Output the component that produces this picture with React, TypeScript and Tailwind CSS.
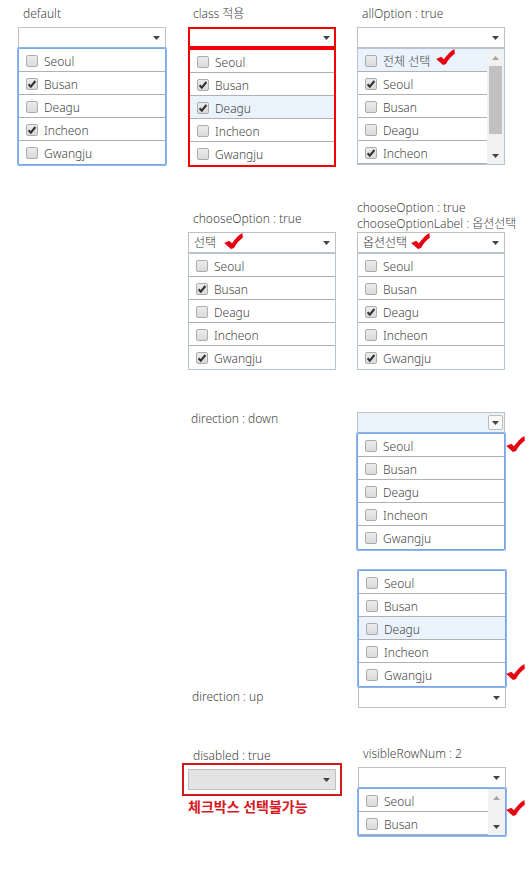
import React, { useState } from "react";

type Tone = "plain" | "focus" | "red";

const CITIES = ["Seoul", "Busan", "Deagu", "Incheon", "Gwangju"];

function RedCheck({ className = "" }: { className?: string }) {
  return (
    <svg viewBox="0 0 19 16" className={`h-4 w-[19px] shrink-0 ${className}`} aria-hidden="true">
      <path d="M0.2 10 L5.2 7.8 L8 10.2 C11 6 14 2.6 18.3 0 L18.9 4.6 C15.4 7.2 12.4 10.8 10 15 L7 16 Z" fill="#e60012" />
    </svg>
  );
}

function Arrow({ up = false, muted = false }: { up?: boolean; muted?: boolean }) {
  return (
    <svg viewBox="0 0 7 4" className="h-1 w-[7px]" aria-hidden="true">
      <path d={up ? "M0 4 L3.5 0 L7 4 Z" : "M0 0 L7 0 L3.5 4 Z"} fill={muted ? "#a3a3a3" : "#444"} />
    </svg>
  );
}

function Trigger({
  name,
  text,
  tone = "plain",
  hover = false,
  disabled = false,
  children,
}: {
  name: string;
  text?: string;
  tone?: Tone;
  hover?: boolean;
  disabled?: boolean;
  children?: React.ReactNode;
}) {
  const border = tone === "red" ? "border-2 border-[#f50000] pl-1" : "border border-[#c0c0c0] pl-[5px] pr-px";
  const fill = disabled ? "bg-[#e3e3e3]" : hover ? "bg-[#eaf2fb]" : "bg-white";
  return (
    <button
      type="button"
      aria-label={name}
      aria-haspopup="listbox"
      disabled={disabled}
      className={`flex h-[21px] w-full items-center ${border} ${fill}`}
    >
      <span className="text-[#333]">{text}</span>
      {children}
      <span
        className={`ml-auto flex size-[15px] items-center justify-center ${
          hover ? "rounded-xs border border-[#bbb] bg-[#f8f8f8]" : ""
        }`}
      >
        <Arrow />
      </span>
    </button>
  );
}

function Option({
  label,
  initial,
  hover,
  last,
  children,
}: {
  label: string;
  initial: boolean;
  hover: boolean;
  last: boolean;
  children?: React.ReactNode;
}) {
  const [checked, setChecked] = useState(initial);
  return (
    <li className={`h-[23px] border-b ${last ? "border-transparent" : "border-[#b0b0b0]"} ${hover ? "bg-[#eaf2fb]" : "bg-white"}`}>
      <label className="flex h-full items-center gap-1.5 pt-0.5 pl-[7px]">
        <span className="relative flex size-3">
          <input
            type="checkbox"
            checked={checked}
            onChange={() => setChecked(!checked)}
            className="size-3 appearance-none rounded-[2px] border border-[#acacac] bg-linear-to-b from-[#ececec] to-[#dadada]"
          />
          {checked && (
            <svg viewBox="0 0 12 12" className="pointer-events-none absolute inset-0 size-3" aria-hidden="true">
              <path d="M2.6 6.2 L4.8 8.6 L9.4 3" fill="none" stroke="#333" strokeWidth="2.1" />
            </svg>
          )}
        </span>
        <span className="pt-0.5">{label}</span>
        {children}
      </label>
    </li>
  );
}

function List({
  options = CITIES,
  checked = [],
  hover,
  tone = "plain",
  scroll,
  marked,
}: {
  options?: string[];
  checked?: string[];
  hover?: string;
  tone?: Tone;
  scroll?: "thumb" | "short";
  marked?: string;
}) {
  const border = {
    plain: "border border-[#b5c5d5]",
    focus: "relative rounded-[1px] border border-[#7aa5e6] ring-1 ring-[#8fb4ee]",
    red: "border-2 border-[#f50000]",
  }[tone];
  return (
    <div className={`flex ${border}`}>
      <ul className="min-w-0 flex-1">
        {options.map((o, i) => (
          <Option
            key={o}
            label={o}
            initial={checked.includes(o)}
            hover={hover === o}
            last={!scroll && i === options.length - 1}
          >
            {marked === o && <RedCheck className="-mt-2" />}
          </Option>
        ))}
      </ul>
      {scroll && (
        <div className="flex w-[17px] flex-col items-center bg-[#f1f1f1]">
          <button type="button" aria-label="Scroll up" className="flex h-[17px] w-full items-center justify-center">
            <Arrow up muted />
          </button>
          {scroll === "thumb" && <div className="h-[68px] w-[13px] bg-[#c1c1c1]" />}
          <button type="button" aria-label="Scroll down" className="mt-auto flex h-[17px] w-full items-center justify-center">
            <Arrow />
          </button>
        </div>
      )}
    </div>
  );
}

function Caption({ children }: { children: React.ReactNode }) {
  return <p className="pb-1.5 pl-[5px]">{children}</p>;
}

function Cell({ children }: { children?: React.ReactNode }) {
  return <div className="relative w-[148px] shrink-0">{children}</div>;
}

export default function App() {
  return (
    <main className="bg-white pt-[7px] pb-8 pl-[18px] font-['Noto_Sans','Noto_Sans_CJK_KR',sans-serif] text-xs leading-[14px] font-light text-[#444]">
      <section className="flex">
        <Cell>
          <Caption>default</Caption>
          <Trigger name="default" />
          <List tone="focus" checked={["Busan", "Incheon"]} />
        </Cell>
        <div className="ml-[22px]">
          <Cell>
            <Caption>class 적용</Caption>
            <Trigger name="class 적용" tone="red" />
            <List tone="red" checked={["Busan", "Deagu"]} hover="Deagu" />
          </Cell>
        </div>
        <div className="ml-[21px]">
          <Cell>
            <Caption>allOption : true</Caption>
            <Trigger name="allOption" />
            <List
              options={["전체 선택", "Seoul", "Busan", "Deagu", "Incheon"]}
              checked={["Seoul", "Incheon"]}
              hover="전체 선택"
              marked="전체 선택"
              scroll="thumb"
            />
          </Cell>
        </div>
      </section>

      <section className="mt-[33px] flex items-end gap-[21px] pl-[170px]">
        <Cell>
          <Caption>chooseOption : true</Caption>
          <Trigger name="chooseOption" text="선택">
            <RedCheck className="-mt-1 ml-2" />
          </Trigger>
          <List checked={["Busan", "Gwangju"]} />
        </Cell>
        <Cell>
          <p className="pb-px leading-[15px] whitespace-nowrap">chooseOption : true</p>
          <p className="pb-px leading-[15px] whitespace-nowrap">chooseOptionLabel : 옵션선택</p>
          <Trigger name="chooseOptionLabel" text="옵션선택">
            <RedCheck className="-mt-1 ml-1" />
          </Trigger>
          <List checked={["Deagu", "Gwangju"]} />
        </Cell>
      </section>

      <section className="mt-[42px] flex gap-[21px] pl-[170px]">
        <Cell>
          <p className="pl-[3px]">direction : down</p>
        </Cell>
        <Cell>
          <Trigger name="direction down" hover />
          <List tone="focus" />
          <RedCheck className="absolute top-6 right-[-20px]" />
        </Cell>
      </section>

      <section className="mt-5 flex items-end gap-[22px] pl-[170px]">
        <Cell>
          <p className="pb-1 pl-1">direction : up</p>
        </Cell>
        <Cell>
          <List tone="focus" hover="Deagu" />
          <Trigger name="direction up" />
          <RedCheck className="absolute right-[-19px] bottom-7" />
        </Cell>
      </section>

      <section className="mt-[39px] flex gap-[22px] pl-[170px]">
        <Cell>
          <p className="pt-0.5 pl-[5px]">disabled : true</p>
          <div className="-mx-1.5 border-2 border-[#cf1b20] p-1">
            <Trigger name="disabled" disabled />
          </div>
          <p className="pt-1 text-sm leading-[14px] font-bold text-[#d8191f]">체크박스 선택불가능</p>
        </Cell>
        <Cell>
          <Caption>visibleRowNum : 2</Caption>
          <Trigger name="visibleRowNum" />
          <List options={["Seoul", "Busan"]} tone="focus" scroll="short" />
          <RedCheck className="absolute right-[-19px] bottom-5" />
        </Cell>
      </section>
    </main>
  );
}
